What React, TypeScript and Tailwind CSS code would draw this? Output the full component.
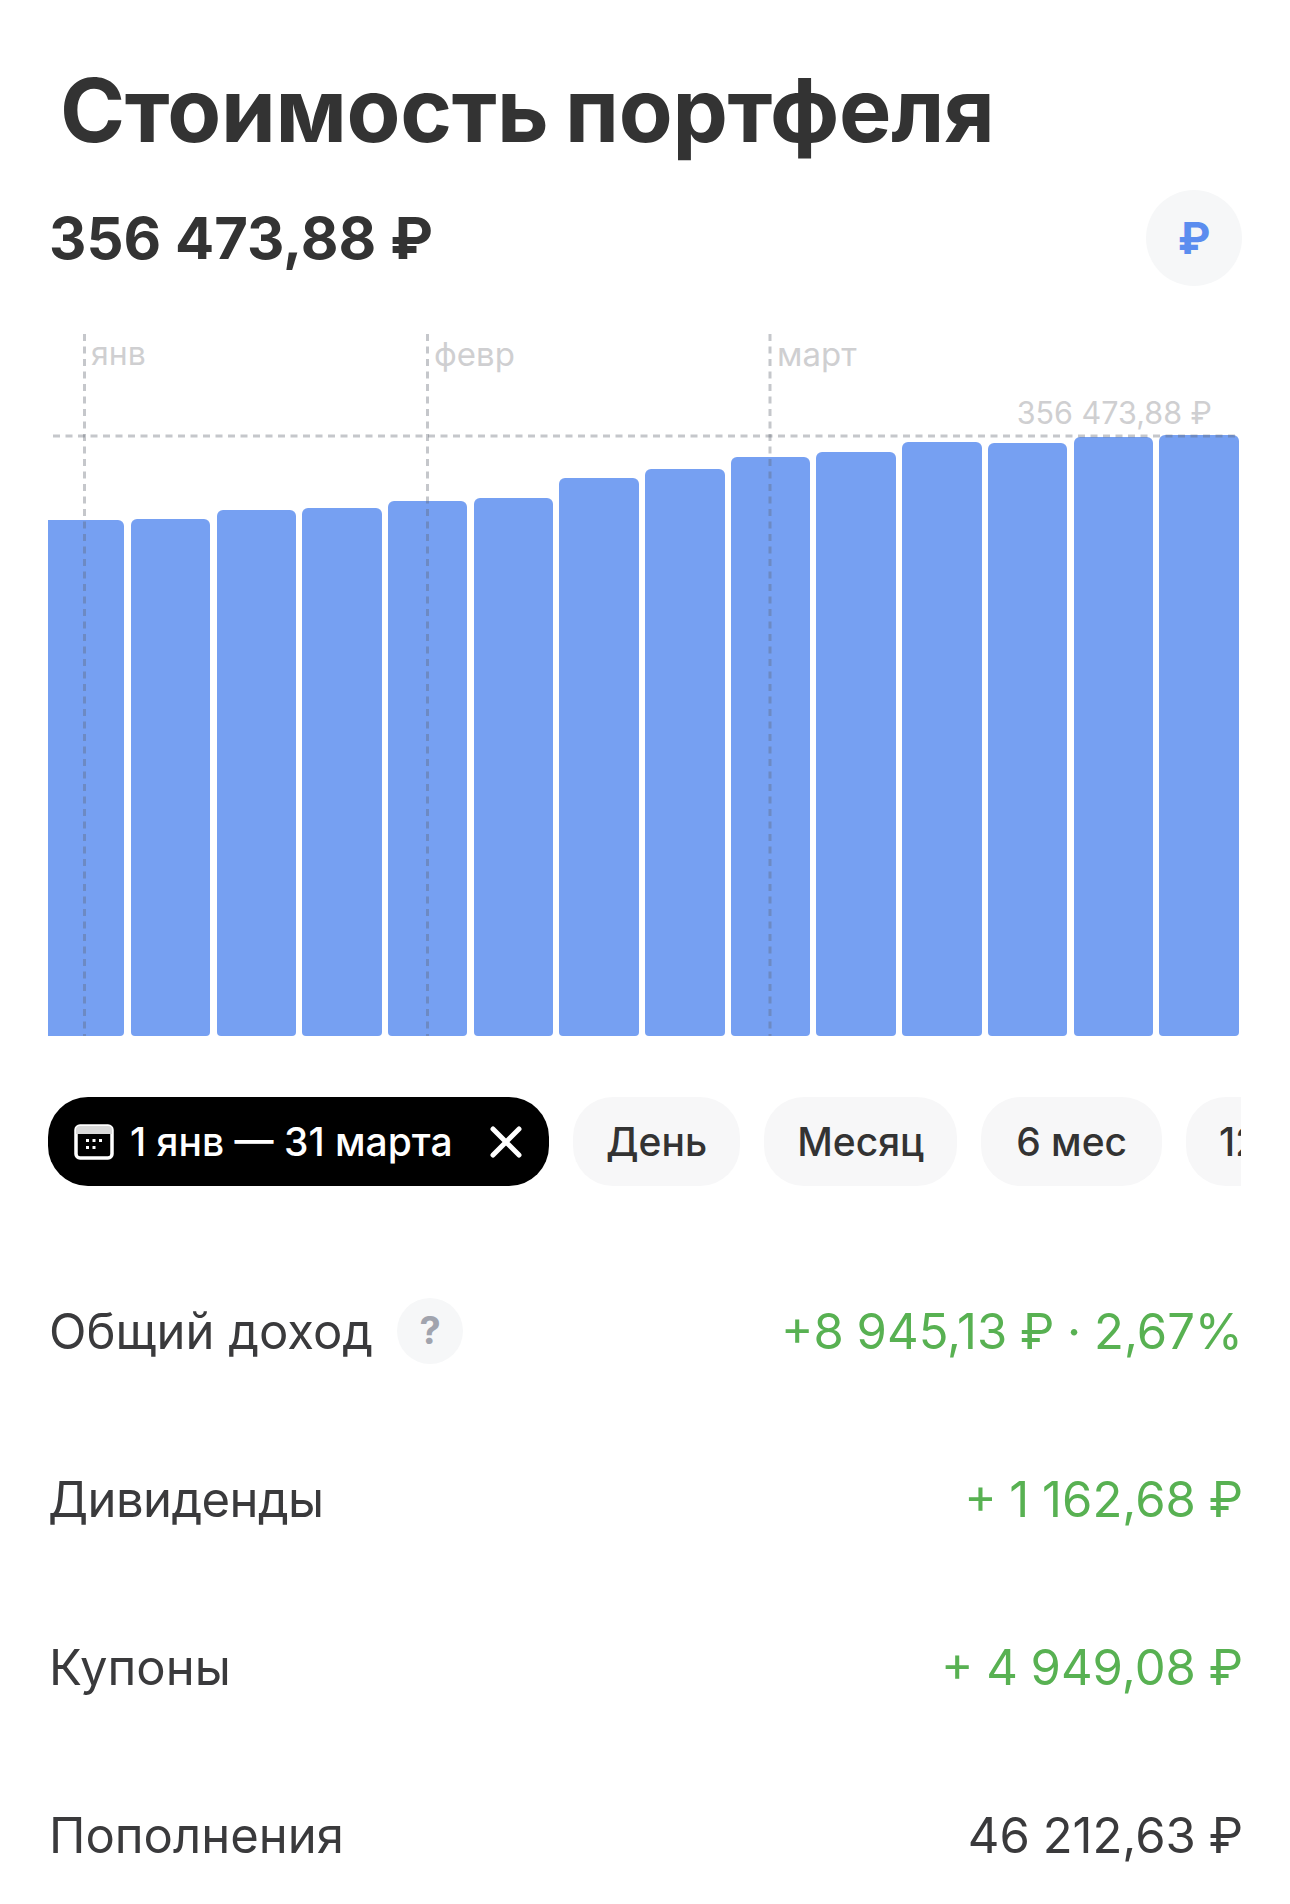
import React from "react";

const bars = [
  { left: 48, right: 124, top: 520 },
  { left: 131, right: 210, top: 519 },
  { left: 217, right: 296, top: 510 },
  { left: 302, right: 382, top: 508 },
  { left: 388, right: 467, top: 501 },
  { left: 474, right: 553, top: 498 },
  { left: 559, right: 639, top: 478 },
  { left: 645, right: 725, top: 469 },
  { left: 731, right: 810, top: 457 },
  { left: 816, right: 896, top: 452 },
  { left: 902, right: 982, top: 442 },
  { left: 988, right: 1067, top: 443 },
  { left: 1074, right: 1153, top: 437 },
  { left: 1159, right: 1239, top: 435 },
];

const rows = [
  { label: "Общий доход", value: "+8 945,13 ₽ · 2,67%", green: true, help: true, labelClass: "" },
  { label: "Дивиденды", value: "+ 1 162,68 ₽", green: true, labelClass: "-ml-[1px] tracking-[-0.6px]" },
  { label: "Купоны", value: "+ 4 949,08 ₽", green: true, labelClass: "" },
  { label: "Пополнения", value: "46 212,63 ₽", green: false, labelClass: "" },
];

function CalendarIcon() {
  return (
    <svg width="40" height="36" viewBox="0 0 40 36" fill="none" className="shrink-0">
      <rect x="2" y="2" width="36" height="32" rx="4" stroke="#fff" strokeWidth="3.5" />
      <path d="M2 6a4 4 0 0 1 4-4h28a4 4 0 0 1 4 4v4H2z" fill="#d9d9d9" />
      <g fill="#fff">
        <rect x="12" y="15" width="3" height="3" />
        <rect x="18.5" y="15" width="3" height="3" />
        <rect x="25" y="15" width="3" height="3" />
        <rect x="12" y="22" width="3" height="3" />
        <rect x="18.5" y="22" width="3" height="3" />
      </g>
    </svg>
  );
}

function Pill({ children, className }: { children: React.ReactNode; className: string }) {
  return (
    <div
      className={
        "flex h-[89px] shrink-0 items-center whitespace-nowrap rounded-[40px] bg-[#f7f7f8] pt-[1px] text-[39px] font-medium text-[#333333] " +
        className
      }
    >
      {children}
    </div>
  );
}

export default function App() {
  return (
    <div className="h-[1904px] w-[1290px] overflow-hidden bg-white font-['Inter','Noto_Sans',sans-serif] text-[#333333]">
      <h1 className="ml-[60px] mt-[60px] text-[88px] font-bold leading-[100px] tracking-[-0.3px] text-[#333333] [word-spacing:-4px]">
        Стоимость портфеля
      </h1>

      <div className="ml-[49px] mr-[49px] mt-[30px] flex h-[96px] items-center justify-between">
        <div className="text-[58px] font-bold leading-none text-[#333333]">356 473,88 ₽</div>
        <div className="flex h-[96px] w-[96px] translate-x-[1px] items-center justify-center rounded-full bg-[#f6f7f8] text-[44px] font-bold text-[#5b8def]">
          ₽
        </div>
      </div>

      <div className="relative mt-[48px] h-[702px] w-[1290px]">
        <div className="absolute inset-0">
          {bars.map((b, i) => (
            <div
              key={i}
              className={"absolute bottom-0 rounded-t-[6px] rounded-b-[4px] bg-[#76a0f2] " + (i === 0 ? "rounded-tl-none rounded-bl-none" : "")}
              style={{ left: b.left, width: b.right - b.left, top: b.top - 334 }}
            />
          ))}
        </div>
        <svg className="absolute inset-0" width="1290" height="702" fill="none">
          <g stroke="#5f6470" strokeOpacity="0.36" strokeWidth="3" strokeDasharray="7 5.5">
            <line x1="84.5" y1="0" x2="84.5" y2="702" />
            <line x1="427.5" y1="0" x2="427.5" y2="702" />
            <line x1="770" y1="0" x2="770" y2="702" />
            <line x1="53" y1="102" x2="1238" y2="102" />
          </g>
        </svg>
        <span className="absolute left-[91px] top-[2px] text-[32px] leading-[36px] text-[#cfcfd1]">янв</span>
        <span className="absolute left-[434px] top-[2px] text-[33px] leading-[36px] text-[#cfcfd1]">февр</span>
        <span className="absolute left-[777px] top-[2px] text-[33px] leading-[36px] text-[#cfcfd1]">март</span>
        <span className="absolute right-[78px] top-[61px] text-[30.5px] leading-[36px] text-[#cfcfd1]">356 473,88 ₽</span>
      </div>

      <div className="ml-[48px] mt-[61px] flex w-[1193px] gap-[24px] overflow-hidden">
        <div className="flex h-[89px] w-[501px] shrink-0 items-center rounded-[40px] bg-black pl-[26px] pr-[26px] text-[39px] font-medium text-white">
          <CalendarIcon />
          <span className="ml-[16px] flex-1 whitespace-nowrap pt-[1px]">1 янв — 31 марта</span>
          <svg width="34" height="34" viewBox="0 0 34 34" fill="none" className="shrink-0">
            <path d="M4 4l26 26M30 4L4 30" stroke="#fff" strokeWidth="5" strokeLinecap="round" />
          </svg>
        </div>
        <Pill className="px-[33px]">День</Pill>
        <Pill className="px-[33px]">Месяц</Pill>
        <Pill className="px-[35px]">6 мес</Pill>
        <Pill className="w-[160px] pl-[33px]">12 мес</Pill>
      </div>

      <div className="ml-[49px] mr-[47px] mt-[62px]">
        {rows.map((r) => (
          <div key={r.label} className="flex h-[168px] items-center justify-between">
            <div className="flex items-center gap-[24px]">
              <span className={"text-[49px] font-normal text-[#3a3a3c] " + r.labelClass}>{r.label}</span>
              {r.help && (
                <span className="-mt-[3px] flex h-[66px] w-[66px] items-center justify-center rounded-full bg-[#f6f7f8] text-[38px] font-bold text-[#a1a4ae]">
                  ?
                </span>
              )}
            </div>
            <span className={"text-[49px] font-normal [word-spacing:-1px] " + (r.green ? "text-[#58b152]" : "text-[#3a3a3c]")}>{r.value}</span>
          </div>
        ))}
      </div>
    </div>
  );
}
